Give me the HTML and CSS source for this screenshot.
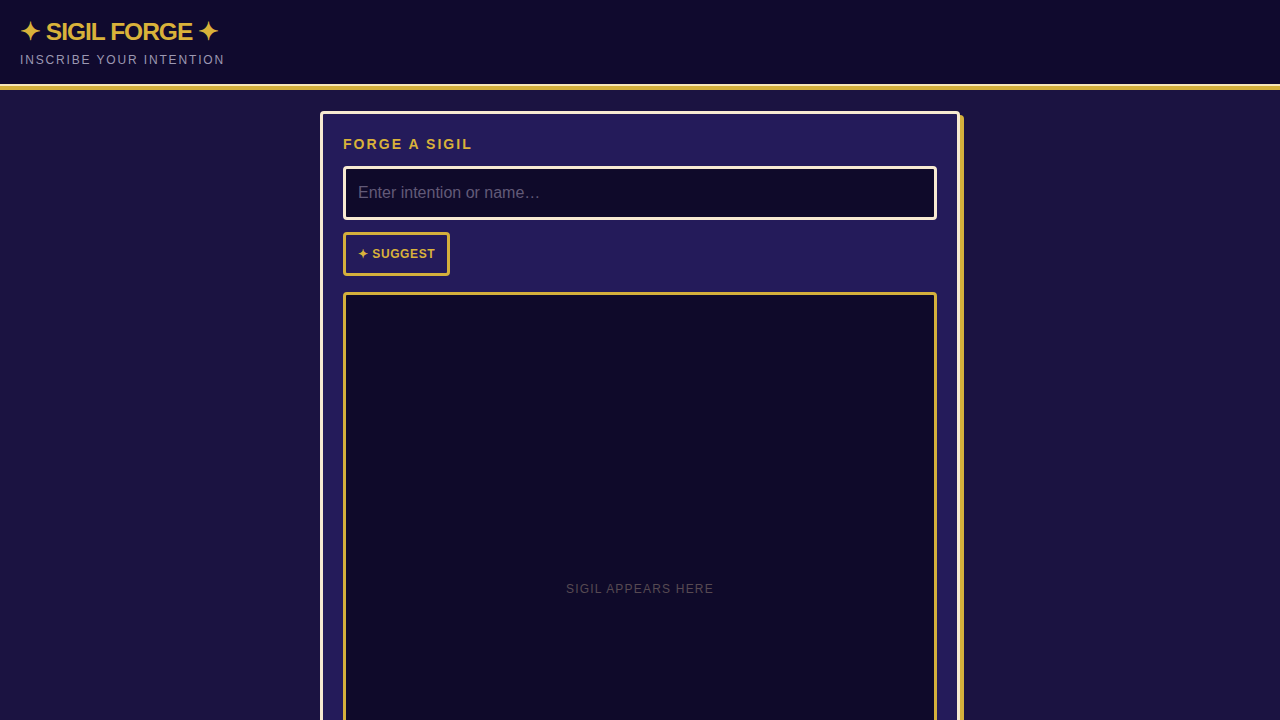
FILE: index.html
```html
<!DOCTYPE html>
<html lang="en">
<head>
<meta charset="utf-8">
<title>Sigil Forge</title>
<link rel="stylesheet" href="styles.css">
</head>
<body>
<header class="site-header">
  <h1 class="brand">✦ SIGIL FORGE ✦</h1>
  <p class="tagline">INSCRIBE YOUR INTENTION</p>
</header>
<main class="main">
  <section class="card">
    <h2 class="card-title">FORGE A SIGIL</h2>
    <input class="intent-input" type="text" placeholder="Enter intention or name…">
    <div class="actions">
      <button class="btn-suggest" type="button">✦ SUGGEST</button>
    </div>
    <div class="sigil-box">
      <span class="sigil-placeholder">SIGIL APPEARS HERE</span>
    </div>
  </section>
</main>
</body>
</html>
```

FILE: styles.css
```css
* { box-sizing: border-box; }
html, body { margin: 0; padding: 0; }
body {
  background: #1b1341;
  font-family: "Liberation Sans", Arial, sans-serif;
  color: #f5ead2;
  min-height: 100vh;
}
.site-header {
  background: #100a2e;
  height: 86px;
  padding: 17px 20px 0;
  border-bottom: 2px solid #f7e6b8;
  box-shadow: 0 4px 0 #d4b03c;
}
.brand {
  margin: 0;
  font-size: 24.5px;
  line-height: 30px;
  font-weight: 700;
  letter-spacing: -1px;
  color: #d9b23a;
}
.tagline {
  margin: 6px 0 0;
  font-size: 12px;
  line-height: 14px;
  letter-spacing: 1.85px;
  color: #9c98b2;
}
.main {
  display: flex;
  justify-content: center;
  padding-top: 25px;
}
.card {
  width: 640px;
  background: #241b5a;
  border: 3px solid #f7ead2;
  border-radius: 4px;
  box-shadow: 4px 4px 0 #d4b03c;
  padding: 22px 20px 20px;
  display: flex;
  flex-direction: column;
}
.card-title {
  margin: 0 0 13px;
  font-size: 14px;
  line-height: 17px;
  font-weight: 700;
  letter-spacing: 2.05px;
  color: #d9b23a;
}
.intent-input {
  width: 100%;
  height: 54px;
  background: #0f0a2a;
  border: 3px solid #f7ead2;
  border-radius: 4px;
  padding: 0 12px;
  font-family: "Liberation Sans", Arial, sans-serif;
  font-size: 16px;
  color: #f5ead2;
  outline: none;
}
.intent-input::placeholder { color: #625a78; }
.actions {
  display: flex;
  margin-top: 12px;
}
.btn-suggest {
  height: 44px;
  width: 107px;
  background: transparent;
  border: 3px solid #d4b03c;
  border-radius: 4px;
  font-family: "Liberation Sans", Arial, sans-serif;
  font-size: 12px;
  font-weight: 700;
  letter-spacing: 0.6px;
  color: #d9b23a;
  padding: 0;
  cursor: pointer;
}
.sigil-box {
  margin-top: 16px;
  width: 100%;
  aspect-ratio: 1 / 1;
  background: #0f0a2a;
  border: 3px solid #d4b03c;
  border-radius: 4px;
  display: flex;
  align-items: center;
  justify-content: center;
}
.sigil-placeholder {
  font-size: 12px;
  letter-spacing: 1.2px;
  color: #574a52;
}
```
